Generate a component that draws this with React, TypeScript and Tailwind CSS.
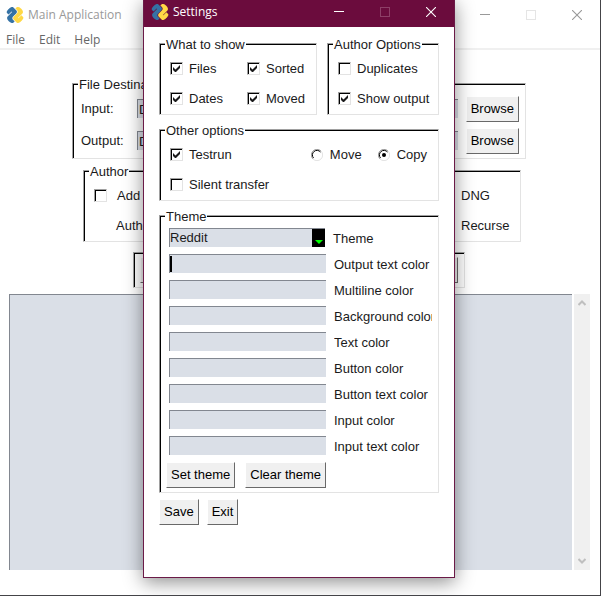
import React from "react";

type LabelProps = { label: string; checked?: boolean; className?: string };

function PythonLogo() {
  return (
    <svg viewBox="1 1 22 22" className="size-4 shrink-0 overflow-visible" aria-hidden="true">
      <g transform="rotate(-45 12 12)">
        <path
          fill="#3572a5"
          d="M14.25.18l.9.2.73.26.59.3.45.32.34.34.25.34.16.33.1.3.04.26.02.2-.01.13V8.5l-.05.63-.13.55-.21.46-.26.38-.3.31-.33.25-.35.19-.35.14-.33.1-.3.07-.26.04-.21.02H8.77l-.69.05-.59.14-.5.22-.41.27-.33.32-.27.35-.2.36-.15.37-.1.35-.07.32-.04.27-.02.21v3.06H3.17l-.21-.03-.28-.07-.32-.12-.35-.18-.36-.26-.36-.36-.35-.46-.32-.59-.28-.73-.21-.88-.14-1.05-.05-1.23.06-1.22.16-1.04.24-.87.32-.71.36-.57.4-.44.42-.33.42-.24.4-.16.36-.1.32-.05.24-.01h.16l.06.01h8.16v-.83H6.18l-.01-2.75-.02-.37.05-.34.11-.31.17-.28.25-.26.31-.23.38-.2.44-.18.51-.15.58-.12.64-.1.71-.06.77-.04.84-.02 1.27.05z"
        />
        <path
          fill="#ffd845"
          d="M21.1 6.11l.28.06.32.12.35.18.36.27.36.35.35.47.32.59.28.73.21.88.14 1.04.05 1.23-.06 1.23-.16 1.04-.24.86-.32.71-.36.57-.4.45-.42.33-.42.24-.4.16-.36.09-.32.05-.24.02-.16-.01h-8.22v.82h5.84l.01 2.76.02.36-.05.34-.11.31-.17.29-.25.25-.31.24-.38.2-.44.17-.51.15-.58.13-.64.09-.71.07-.77.04-.84.01-1.27-.04-1.07-.14-.9-.2-.73-.25-.59-.3-.45-.33-.34-.34-.25-.34-.16-.33-.1-.3-.04-.25-.02-.2.01-.13v-5.34l.05-.64.13-.54.21-.46.26-.38.3-.32.33-.24.35-.2.35-.14.33-.1.3-.06.26-.04.21-.02.13-.01h5.84l.69-.05.59-.14.5-.21.41-.28.33-.32.27-.35.2-.36.15-.36.1-.35.07-.32.04-.28.02-.21V6.07h2.09l.14.01z"
        />
      </g>
    </svg>
  );
}

function WindowButtons({ dim }: { dim: string }) {
  return (
    <div className="ml-auto flex">
      <button type="button" aria-label="Minimize" className="flex w-[46px] items-center justify-center">
        <svg width="10" height="10" aria-hidden="true">
          <path d="M0 4.5h10" stroke="currentColor" />
        </svg>
      </button>
      <button type="button" aria-label="Maximize" className={`flex w-[46px] items-center justify-center ${dim}`}>
        <svg width="10" height="10" aria-hidden="true">
          <rect x=".5" y=".5" width="9" height="9" fill="none" stroke="currentColor" />
        </svg>
      </button>
      <button type="button" aria-label="Close" className="flex w-[46px] items-center justify-center">
        <svg width="10" height="10" aria-hidden="true">
          <path d="M0 0l10 10M10 0L0 10" stroke="currentColor" strokeWidth="1.1" />
        </svg>
      </button>
    </div>
  );
}

function Frame({ title, className = "", children }: { title: string; className?: string; children: React.ReactNode }) {
  return (
    <fieldset
      className={`min-w-0 border border-t-[#a0a0a0] border-r-[#e3e3e3] border-b-[#e3e3e3] border-l-[#a0a0a0] shadow-[inset_1px_1px_0_#000] ${className}`}
    >
      <legend className="ml-[5px] bg-white px-px pt-0.5 leading-[15px]">{title}</legend>
      {children}
    </fieldset>
  );
}

function Check({ label, checked = false, className = "" }: LabelProps) {
  return (
    <label className={`flex h-[30px] items-center gap-1.5 pb-px whitespace-nowrap ${className}`}>
      <span className="grid size-[13px] shrink-0">
        <input
          type="checkbox"
          defaultChecked={checked}
          className="peer col-start-1 row-start-1 size-[13px] appearance-none border border-t-[#a0a0a0] border-r-[#e3e3e3] border-b-[#e3e3e3] border-l-[#a0a0a0] bg-white shadow-[inset_1px_1px_0_#000]"
        />
        <svg
          viewBox="0 0 13 13"
          className="pointer-events-none invisible z-10 col-start-1 row-start-1 size-[13px] peer-checked:visible"
          aria-hidden="true"
        >
          <path d="M3 5v3l2 2h1l4-4V3L5.500 7.500z" fill="#1a1a1b" />
        </svg>
      </span>
      {label}
    </label>
  );
}

function Radio({ label, checked = false }: LabelProps) {
  return (
    <label className="flex h-[30px] items-center gap-[7px] pb-px">
      <span className="grid size-3 shrink-0">
        <input type="radio" name="mode" defaultChecked={checked} className="peer col-start-1 row-start-1 size-3 appearance-none" />
        <svg
          viewBox="0 0 12 12"
          fill="none"
          className="pointer-events-none col-start-1 row-start-1 size-3 [&>circle]:invisible peer-checked:[&>circle]:visible"
          aria-hidden="true"
        >
          <path d="M10 2a5.500 5.500 0 1 0-8 8" stroke="#a0a0a0" />
          <path d="M10 2a5.500 5.500 0 0 1-8 8" stroke="#e3e3e3" />
          <path d="M9.500 3a4.500 4.500 0 0 0-7 6" stroke="#000" />
          <circle cx="6" cy="6" r="2" fill="#000" />
        </svg>
      </span>
      {label}
    </label>
  );
}

function PushButton({ children }: { children: React.ReactNode }) {
  return (
    <button
      type="button"
      className="h-[26px] shrink-0 border border-t-white border-r-[#696969] border-b-[#696969] border-l-white bg-[#f0f0f0] px-1 whitespace-nowrap text-black"
    >
      {children}
    </button>
  );
}

const FIELD = "h-[19px] min-w-0 rounded-none border-t border-l border-[#828790] bg-[#dadfe7] outline-none";

function PathRow({ label, id }: { label: string; id: string }) {
  return (
    <div className="flex h-8 items-center pb-px">
      <label htmlFor={id} className="w-14 shrink-0">
        {label}
      </label>
      <input id={id} defaultValue="D" className={`${FIELD} mr-2 flex-1 pl-px`} />
      <PushButton>Browse</PushButton>
    </div>
  );
}

function ColorRow({ label, caret }: { label: string; caret?: boolean }) {
  const id = label.toLowerCase().replace(/ /g, "-");
  return (
    <div className="flex h-[26px] items-start gap-2 pt-[3px]">
      <span className="grid w-[157px] shrink-0 items-center">
        <input id={id} className={`${FIELD} col-start-1 row-start-1`} />
        {caret && <span className="col-start-1 row-start-1 ml-px h-4 w-0.5 bg-black" />}
      </span>
      <label htmlFor={id} className="w-[98px] overflow-hidden leading-[22px] whitespace-nowrap">
        {label}
      </label>
    </div>
  );
}

function SettingsWindow() {
  return (
    <section
      aria-label="Settings"
      className="absolute top-0 left-[143px] flex h-[578px] w-[312px] flex-col border border-t-0 border-[#6b1a47] bg-white shadow-[0_4px_18px_rgba(0,0,0,0.45)]"
    >
      <header className="flex h-[27px] bg-[#6b0c3d] pb-1 font-['Open_Sans',sans-serif] text-xs text-white">
        <div className="flex items-center gap-[5px] pl-2">
          <PythonLogo />
          <h2>Settings</h2>
        </div>
        <WindowButtons dim="text-[#8d3f67]" />
      </header>

      <form className="flex flex-col gap-1.5 px-[15px] pt-2">
        <div className="flex gap-2.5">
          <Frame title="What to show" className="w-[158px]">
            <div className="grid grid-cols-[77px_1fr] pt-0.5 pl-2.5">
              <Check label="Files" checked />
              <Check label="Sorted" checked />
              <Check label="Dates" checked />
              <Check label="Moved" checked />
            </div>
          </Frame>
          <Frame title="Author Options" className="flex-1">
            <div className="pt-0.5 pl-2.5">
              <Check label="Duplicates" />
              <Check label="Show output" checked />
            </div>
          </Frame>
        </div>

        <Frame title="Other options">
          <div className="pt-0.5 pr-[11px] pl-2.5">
            <div className="flex gap-4">
              <Check label="Testrun" checked className="mr-auto" />
              <Radio label="Move" />
              <Radio label="Copy" checked />
            </div>
            <Check label="Silent transfer" />
          </div>
        </Frame>

        <Frame title="Theme">
          <div className="pt-px pb-1 pl-[9px]">
            <div className="flex h-[26px] items-start gap-2 pt-[3px]">
              <span className="grid w-[156px] shrink-0">
                <select id="theme" className={`${FIELD} col-start-1 row-start-1 appearance-none`}>
                  <option>Reddit</option>
                </select>
                <span className="pointer-events-none z-10 col-start-1 row-start-1 mt-px flex w-[13px] items-center justify-center justify-self-end bg-black pt-2">
                  <svg width="8" height="4" aria-hidden="true">
                    <path d="M0 0h8L4 4z" fill="#0f0" />
                  </svg>
                </span>
              </span>
              <label htmlFor="theme" className="leading-[22px]">
                Theme
              </label>
            </div>
            <ColorRow label="Output text color" caret />
            <ColorRow label="Multiline color" />
            <ColorRow label="Background color" />
            <ColorRow label="Text color" />
            <ColorRow label="Button color" />
            <ColorRow label="Button text color" />
            <ColorRow label="Input color" />
            <ColorRow label="Input text color" />
            <div className="-ml-[3px] flex gap-2.5 pt-[3px]">
              <PushButton>Set theme</PushButton>
              <PushButton>Clear theme</PushButton>
            </div>
          </div>
        </Frame>

        <div className="flex gap-2">
          <PushButton>Save</PushButton>
          <PushButton>Exit</PushButton>
        </div>
      </form>
    </section>
  );
}

export default function App() {
  return (
    <div className="relative flex min-h-screen flex-col overflow-hidden border-r border-b border-[#444448] bg-white font-['Liberation_Sans',Arial,sans-serif] text-[13px] leading-4 text-[#1a1a1b]">
      <header className="flex h-[29px] font-['Open_Sans',sans-serif] text-xs text-[#999]">
        <div className="flex items-center gap-[5px] pl-[7px]">
          <PythonLogo />
          <h1>Main Application</h1>
        </div>
        <WindowButtons dim="text-[#e5e5e5]" />
      </header>
      <nav className="flex h-[21px] items-center gap-3.5 border-b-2 border-[#f0f0f0] pt-0.5 pl-1.5 font-['Open_Sans',sans-serif] text-xs text-[#666]">
        <button type="button">File</button>
        <button type="button">Edit</button>
        <button type="button">Help</button>
      </nav>

      <main className="flex flex-1 flex-col pt-[25px]">
        <div className="flex flex-col pr-[74px] pl-[72px]">
          <Frame title="File Destinations">
            <div className="pt-px pr-1.5 pb-px pl-2">
              <PathRow label="Input:" id="input-path" />
              <PathRow label="Output:" id="output-path" />
            </div>
          </Frame>
          <Frame title="Author" className="mt-[3px] mr-[5px] ml-[11px]">
            <div className="grid grid-cols-[1fr_78px] pt-0.5 pl-2.5">
              <Check label="Add" className="gap-2.5" />
              <Check label="DNG" />
              <label className="flex items-center gap-2 pl-[22px]">
                Author:
                <input className={`${FIELD} w-40`} />
              </label>
              <Check label="Recurse" />
            </div>
          </Frame>
          <div className="mx-[61px] mt-2.5 grid border border-t-[#a0a0a0] border-r-[#e3e3e3] border-b-[#e3e3e3] border-l-[#a0a0a0] px-1.5 py-1 shadow-[inset_1px_1px_0_#000]">
            <PushButton>Start</PushButton>
          </div>
        </div>

        <div className="mt-1.5 mr-2.5 mb-[25px] ml-[9px] flex flex-1 gap-0.5">
          <textarea
            aria-label="Output"
            className="min-w-0 flex-1 resize-none border-t border-l border-[#828790] bg-[#dadfe7] outline-none"
          />
          <div className="flex w-4 flex-col items-center justify-between bg-[#f0f0f0] py-1.5 text-[#bfbfbf]">
            <svg width="8" height="6" fill="none" aria-hidden="true">
              <path d="M.5 5L4 1.500 7.500 5" stroke="currentColor" strokeWidth="2" />
            </svg>
            <svg width="8" height="6" fill="none" aria-hidden="true">
              <path d="M.5 1L4 4.500 7.500 1" stroke="currentColor" strokeWidth="2" />
            </svg>
          </div>
        </div>
      </main>

      <SettingsWindow />
    </div>
  );
}
